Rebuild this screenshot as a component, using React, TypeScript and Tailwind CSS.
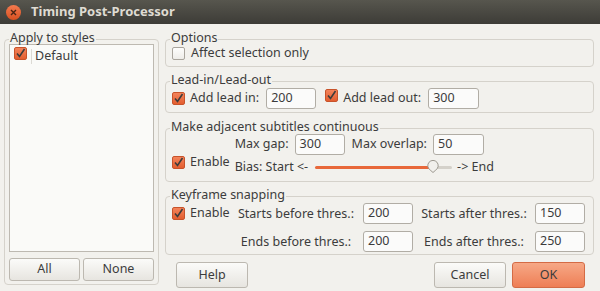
import React from 'react';

const font = { fontFamily: '"Noto Sans", "Open Sans", sans-serif' };

function Check({ checked = true }: { checked?: boolean }) {
  if (!checked) {
    return <span className="inline-block h-[13px] w-[13px] shrink-0 rounded-[2px] border border-[#a9a59d] bg-gradient-to-b from-[#fdfdfc] to-[#eeede9]" />;
  }
  return (
    <span className="relative inline-flex h-[13px] w-[13px] shrink-0 items-center justify-center rounded-[2px] border border-[#c8532a] bg-gradient-to-b from-[#f3835a] to-[#e35e2f]">
      <svg width="11" height="11" viewBox="0 0 11 11" className="absolute">
        <path d="M2 5.5 L4.5 8.5 L9.5 1" fill="none" stroke="#3c3c3c" strokeWidth="1.6" />
      </svg>
    </span>
  );
}

function Group({ title, className, children }: { title: string; className?: string; children?: React.ReactNode }) {
  return (
    <div className={`relative rounded-[4px] border border-[#d5d2cb] ${className ?? ''}`}>
      <span className="absolute left-[4px] top-[-9px] bg-[#f2f1ed] px-[1px] leading-[13px]">{title}</span>
      {children}
    </div>
  );
}

function Field({ value, className }: { value: string; className?: string }) {
  return (
    <div className={`flex h-[21px] items-center rounded-[3px] border border-[#b1ada5] bg-[#fbfbfa] pl-[4px] ${className ?? 'w-[50px]'}`}>
      {value}
    </div>
  );
}

function Btn({ label, primary, className }: { label: string; primary?: boolean; className?: string }) {
  return (
    <div
      className={`flex items-center justify-center rounded-[3px] border ${
        primary
          ? 'border-[#d46b45] bg-gradient-to-b from-[#f6a886] to-[#ee7e55]'
          : 'border-[#bcb8b0] bg-gradient-to-b from-[#fbfbf9] to-[#e7e5e0]'
      } ${className ?? ''}`}
    >
      {label}
    </div>
  );
}

export default function App() {
  return (
    <div style={font} className="flex h-[291px] w-[600px] flex-col overflow-hidden bg-[#f2f1ed] text-[12.5px] text-[#3c3c3c]">
      {/* Title bar */}
      <div className="flex h-[24px] shrink-0 items-center bg-gradient-to-b from-[#57564e] to-[#3d3c37] pl-[6px]">
        <span className="flex h-[15px] w-[15px] items-center justify-center rounded-full bg-gradient-to-b from-[#f47a4e] to-[#d8501f]">
          <svg width="7" height="7" viewBox="0 0 7 7">
            <path d="M1 1 L6 6 M6 1 L1 6" stroke="#4a2414" strokeWidth="1.4" />
          </svg>
        </span>
        <span className="ml-[10px] text-[13px] font-bold text-[#dfdbd2]">Timing Post-Processor</span>
      </div>

      <div className="flex flex-1 pl-[4px] pr-[6px] pt-[15px]">
        {/* Left column */}
        <Group title="Apply to styles" className="mb-[6px] flex w-[155px] flex-col px-[4px] pb-[3px] pt-[4px]">
          <div className="flex-1 border border-[#bdb9b1] bg-[#fafaf8] pr-[15px]">
            <div className="flex h-[22px] items-center">
              <span className="ml-[4px]">
                <Check />
              </span>
              <span className="ml-[4px] h-[15px] w-px bg-[#dcdad4]" />
              <span className="ml-[3px]">Default</span>
            </div>
          </div>
          <div className="mt-[6px] flex gap-[3px]">
            <Btn label="All" className="h-[23px] flex-1" />
            <Btn label="None" className="h-[23px] flex-1" />
          </div>
        </Group>

        {/* Right column */}
        <div className="ml-[6px] flex flex-1 flex-col">
          <Group title="Options" className="flex h-[28px] items-center pl-[6px] pt-[1px]">
            <Check checked={false} />
            <span className="ml-[6px]">Affect selection only</span>
          </Group>

          <Group title="Lead-in/Lead-out" className="mt-[14px] flex h-[32px] items-center pl-[6px] pt-[2px]">
            <Check />
            <span className="ml-[5px]">Add lead in:</span>
            <Field value="200" className="ml-[7px] w-[50px]" />
            <span className="ml-[9px]">
              <Check />
            </span>
            <span className="ml-[5px]">Add lead out:</span>
            <Field value="300" className="ml-[7px] w-[51px]" />
          </Group>

          <Group title="Make adjacent subtitles continuous" className="mt-[15px] flex h-[54px] pl-[6px] pt-[5px]">
            <div className="flex items-center pt-[10px]">
              <Check />
              <span className="ml-[5px]">Enable</span>
            </div>
            <div className="ml-[5px] flex flex-col">
              <div className="flex items-center">
                <span>Max gap:</span>
                <Field value="300" className="ml-[6px] w-[50px]" />
                <span className="ml-[7px]">Max overlap:</span>
                <Field value="50" className="ml-[6px] w-[51px]" />
              </div>
              <div className="mt-[3px] flex items-center">
                <span>Bias: Start &lt;-</span>
                <div className="relative ml-[7px] flex h-[14px] w-[137px] items-center">
                  <div className="h-[3px] w-[118px] rounded-l-full bg-[#e8683a]" />
                  <div className="h-[3px] flex-1 rounded-r-full bg-[#d4d1ca]" />
                  <svg width="14" height="14" viewBox="0 0 14 14" className="absolute left-[111px] top-0">
                    <path d="M7 12.5 L4.2 10 A5.2 5.2 0 1 1 9.8 10 Z" fill="#f1f0ec" stroke="#9d9990" strokeWidth="1" />
                  </svg>
                </div>
                <span className="ml-[5px]">-&gt; End</span>
              </div>
            </div>
          </Group>

          <Group title="Keyframe snapping" className="mt-[14px] grid h-[59px] grid-cols-[57px_134px_50px_122px_50px] grid-rows-[21px_21px] content-start gap-y-[7px] pl-[6px] pt-[6px]">
            <div className="flex items-center">
              <Check />
              <span className="ml-[5px]">Enable</span>
            </div>
            <span className="text-center leading-[21px]">Starts before thres.:</span>
            <Field value="200" className="w-[50px]" />
            <span className="text-center leading-[21px]">Starts after thres.:</span>
            <Field value="150" className="w-[50px]" />
            <span />
            <span className="text-center leading-[21px]">Ends before thres.:</span>
            <Field value="200" className="w-[50px]" />
            <span className="text-center leading-[21px]">Ends after thres.:</span>
            <Field value="250" className="w-[50px]" />
          </Group>

          <div className="mt-[7px] flex">
            <Btn label="Help" className="ml-[11px] h-[26px] w-[72px]" />
            <Btn label="Cancel" className="ml-auto h-[26px] w-[72px]" />
            <Btn label="OK" primary className="ml-[6px] mr-[9px] h-[26px] w-[73px]" />
          </div>
        </div>
      </div>
    </div>
  );
}
